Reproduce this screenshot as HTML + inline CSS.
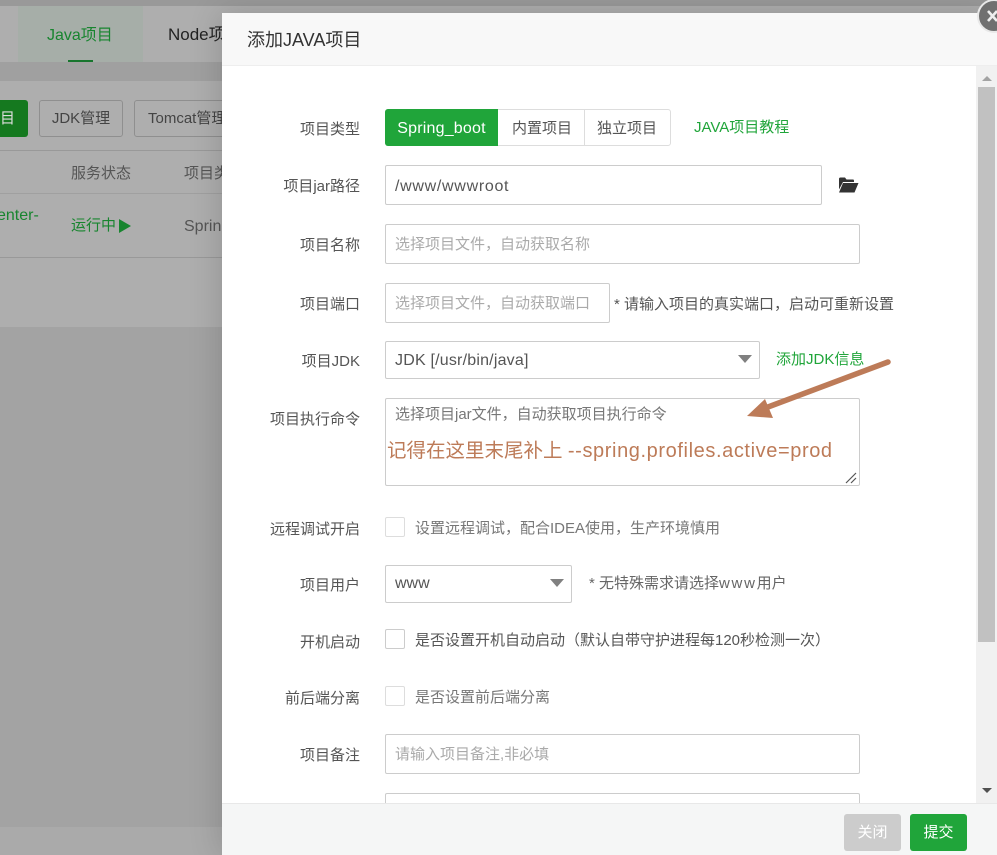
<!DOCTYPE html>
<html><head><meta charset="utf-8">
<style>
html,body{margin:0;padding:0}
body{width:997px;height:855px;overflow:hidden;position:relative;background:#a3a3a3;font-family:"Liberation Sans","Noto Sans CJK SC",sans-serif;font-size:15px;color:#555}
.a{position:absolute}
.t{position:absolute;white-space:nowrap;line-height:20px;margin-top:1px}
.l{position:absolute;white-space:nowrap;line-height:20px;right:637px;color:#555;text-align:right;margin-top:1px}
.i{position:absolute;box-sizing:border-box;border:1px solid #ccc;border-radius:2px;background:#fff;height:38px}
.p{color:#aaa}
.c{position:absolute;box-sizing:border-box;width:20px;height:20px;border:1px solid #ddd;border-radius:2px;background:#fff;left:385px}
.b{position:absolute;box-sizing:border-box;border:1px solid #8f8f8f;border-radius:3px;height:37px;top:100px;line-height:35px;color:#444;white-space:nowrap;overflow:hidden}
.tri{position:absolute;width:0;height:0;border-left:7px solid transparent;border-right:7px solid transparent;border-top:8px solid #808080}
</style></head><body>
<div class="a" style="left:0;top:0;width:997px;height:6px;background:#999"></div>
<div class="a" style="left:0;top:6px;width:997px;height:56px;background:#aeaeae"></div>
<div class="a" style="left:18px;top:6px;width:125px;height:56px;background:#a6aea8"></div>
<div class="a" style="left:68px;top:60px;width:25px;height:2px;background:#18752e"></div>
<div class="t" style="left:47px;top:25px;font-size:16px;color:#18852f">Java项目</div>
<div class="t" style="left:168px;top:24px;font-size:17px;color:#222">Node项</div>
<div class="a" style="left:0;top:62px;width:997px;height:19px;background:#a0a0a0"></div>
<div class="a" style="left:0;top:81px;width:997px;height:246px;background:#aeaeae"></div>
<div class="a" style="left:0;top:100px;width:28px;height:37px;background:#15791f;border-radius:0 3px 3px 0;color:#ddd;line-height:37px">目</div>
<div class="b" style="left:39px;width:84px;text-align:center">JDK管理</div>
<div class="b" style="left:134px;width:110px;padding-left:13px">Tomcat管理</div>
<div class="a" style="left:0;top:150px;width:222px;height:1px;background:#999"></div>
<div class="a" style="left:0;top:193px;width:222px;height:1px;background:#a0a0a0"></div>
<div class="a" style="left:0;top:257px;width:222px;height:1px;background:#999"></div>
<div class="t" style="left:71px;top:163px;color:#555">服务状态</div>
<div class="t" style="left:184px;top:163px;color:#555">项目类</div>
<div class="t" style="left:-3px;top:205px;color:#18852f;font-size:16px">enter-</div>
<div class="t" style="left:71px;top:215px;color:#18852f">运行中</div>
<div class="a" style="left:119px;top:219px;width:0;height:0;border-left:12px solid #18852f;border-top:7px solid transparent;border-bottom:7px solid transparent"></div>
<div class="t" style="left:184px;top:216px;color:#555;font-size:16px">Sprin</div>
<div class="a" style="left:0;top:827px;width:222px;height:28px;background:#aaa"></div>

<!-- modal -->
<div class="a" style="left:222px;top:13px;width:775px;height:842px;background:#fff;box-shadow:-2px 0 30px rgba(0,0,0,.16)"></div>
<div class="a" style="left:222px;top:13px;width:775px;height:52px;background:#f8f8f8;border-bottom:1px solid #eee"></div>
<div class="t" style="left:247px;top:29px;font-size:18px;color:#333">添加JAVA项目</div>

<div class="a" style="left:977px;top:-1px;width:34px;height:34px;box-sizing:border-box;background:#707070;border:2px solid #e8e8e8;border-radius:50%"></div>
<svg class="a" style="left:977px;top:0" width="20" height="32"><path d="M11 11L20 21M20 11L11 21" stroke="#eee" stroke-width="2.6"/></svg>

<!-- scrollbar -->
<div class="a" style="left:976px;top:66px;width:21px;height:737px;background:#f1f1f1"></div>
<div class="a" style="left:978px;top:87px;width:17px;height:555px;background:#c1c1c1"></div>
<div class="a" style="left:982px;top:76px;width:0;height:0;border-left:5px solid transparent;border-right:5px solid transparent;border-bottom:5px solid #a3a3a3"></div>
<div class="a" style="left:982px;top:788px;width:0;height:0;border-left:5px solid transparent;border-right:5px solid transparent;border-top:5px solid #505050"></div>

<!-- form -->
<div class="l" style="top:119px">项目类型</div>
<div class="a" style="left:385px;top:109px;width:286px;height:37px;box-sizing:border-box;border:1px solid #ddd;border-radius:3px;background:#fff"></div>
<div class="a" style="left:385px;top:109px;width:113px;height:37px;background:#20a53a;border-radius:3px 0 0 3px;color:#fff;line-height:40px;text-align:center;font-size:16px;letter-spacing:.2px">Spring_boot</div>
<div class="a" style="left:584px;top:109px;width:1px;height:37px;background:#ddd"></div>
<div class="t" style="left:512px;top:118px">内置项目</div>
<div class="t" style="left:597px;top:118px">独立项目</div>
<div class="t" style="left:694px;top:117px;color:#20a53a">JAVA项目教程</div>

<div class="l" style="top:176px">项目jar路径</div>
<div class="i" style="left:385px;top:165px;width:437px;height:40px;line-height:41px;padding-left:9px;font-size:16px;letter-spacing:.7px">/www/wwwroot</div>
<svg class="a" style="left:838px;top:177px" width="21" height="16" viewBox="0 0 21 16"><path d="M1 4V2Q1 .5 2.5 .5H7L8.5 2.5H15Q16 2.5 16 3.7V5H5L1 12.5ZM5 6H20.5L16.5 15.5H1Z" fill="#333"/></svg>

<div class="l" style="top:235px">项目名称</div>
<div class="i p" style="left:385px;top:224px;width:475px;height:40px;line-height:40px;padding-left:9px">选择项目文件，自动获取名称</div>

<div class="l" style="top:294px">项目端口</div>
<div class="i p" style="left:385px;top:283px;width:225px;height:40px;line-height:40px;padding-left:9px;overflow:hidden">选择项目文件，自动获取端口</div>
<div class="t" style="left:614px;top:294px">* 请输入项目的真实端口，启动可重新设置</div>

<div class="l" style="top:351px">项目JDK</div>
<div class="i" style="left:385px;top:341px;width:375px;line-height:38px;padding-left:9px;font-size:16px;letter-spacing:.2px">JDK [/usr/bin/java]</div>
<div class="tri" style="left:738px;top:355px"></div>
<div class="t" style="left:776px;top:349px;color:#20a53a">添加JDK信息</div>

<div class="l" style="top:409px">项目执行命令</div>
<div class="i" style="left:385px;top:398px;width:475px;height:88px"></div>
<div class="t" style="left:395px;top:404px;color:#777">选择项目jar文件，自动获取项目执行命令</div>
<div class="t" style="left:387px;top:439px;font-size:19.5px;color:#bd7b58;line-height:22px">记得在这里末尾补上 <span style="font-size:20px;letter-spacing:.6px">--spring.profiles.active=prod</span></div>
<svg class="a" style="left:845px;top:472px" width="12" height="12"><path d="M1 11L11 1M6 11L11 6" stroke="#555" stroke-width="1.2"/></svg>
<svg class="a" style="left:740px;top:355px" width="160" height="70"><path d="M148 7L28 52" stroke="#bd7b58" stroke-width="5.5" stroke-linecap="round"/><path d="M7 61L25 44L33 63Z" fill="#bd7b58"/></svg>

<div class="l" style="top:519px">远程调试开启</div>
<div class="c" style="top:517px"></div>
<div class="t" style="left:415px;top:518px;color:#777">设置远程调试，配合IDEA使用，生产环境慎用</div>

<div class="l" style="top:575px">项目用户</div>
<div class="i" style="left:385px;top:565px;width:187px;line-height:36px;padding-left:9px;font-size:16px">www</div>
<div class="tri" style="left:550px;top:579px"></div>
<div class="t" style="left:589px;top:573px;color:#666">* 无特殊需求请选择<span style="letter-spacing:1.7px">www</span>用户</div>

<div class="l" style="top:632px">开机启动</div>
<div class="c" style="top:629px;border-color:#ccc"></div>
<div class="t" style="left:415px;top:630px;color:#555">是否设置开机自动启动（默认自带守护进程每120秒检测一次）</div>

<div class="l" style="top:688px">前后端分离</div>
<div class="c" style="top:686px"></div>
<div class="t" style="left:415px;top:687px;color:#777">是否设置前后端分离</div>

<div class="l" style="top:745px">项目备注</div>
<div class="i p" style="left:385px;top:734px;width:475px;height:40px;line-height:40px;padding-left:9px">请输入项目备注,非必填</div>
<div class="i" style="left:385px;top:793px;width:475px;height:40px"></div>

<!-- footer -->
<div class="a" style="left:222px;top:803px;width:775px;height:52px;background:#f5f6f6;border-top:1px solid #e8e8e8;box-sizing:border-box"></div>
<div class="a" style="left:844px;top:814px;width:57px;height:37px;background:#ccc;border-radius:3px;color:#fff;line-height:37px;text-align:center">关闭</div>
<div class="a" style="left:910px;top:814px;width:57px;height:37px;background:#20a53a;border-radius:3px;color:#fff;line-height:37px;text-align:center">提交</div>
</body></html>
